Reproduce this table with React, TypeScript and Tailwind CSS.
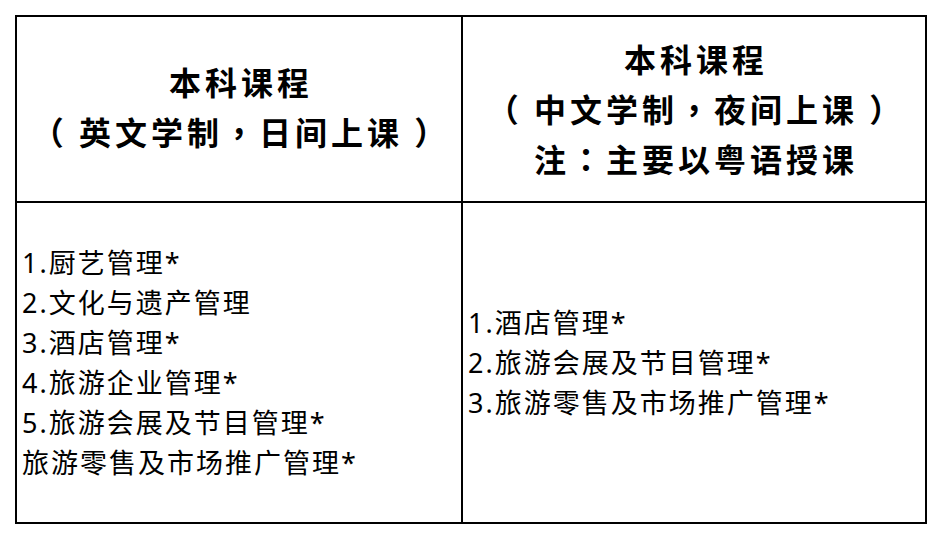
export default function App() {
  const leftItems = ["1.厨艺管理*", "2.文化与遗产管理", "3.酒店管理*", "4.旅游企业管理*", "5.旅游会展及节目管理*", "旅游零售及市场推广管理*"];
  const rightItems = ["1.酒店管理*", "2.旅游会展及节目管理*", "3.旅游零售及市场推广管理*"];

  return (
    <div className="w-[942px] h-[540px] bg-white pt-[15px] pl-[15px]">
      <table className="border-collapse border-2 border-black text-black">
        <tbody>
          <tr className="h-[186px]">
            <td className="w-[446px] border-2 border-black text-center align-middle pb-[7px] font-bold text-[32px] leading-[50px] tracking-[4px] [font-family:'Noto_Sans_CJK_TC',sans-serif]">
              <div className="pl-[4px]">本科课程</div>
              <div className="pl-[4px] whitespace-pre">（ 英文学制，日间上课 ）</div>
            </td>
            <td className="w-[464px] border-2 border-black text-center align-middle pb-[2px] font-bold text-[32px] leading-[50px] tracking-[4px] [font-family:'Noto_Sans_CJK_TC',sans-serif]">
              <div className="pl-[4px]">本科课程</div>
              <div className="pl-[4px] whitespace-pre">（ 中文学制，夜间上课 ）</div>
              <div className="pl-[4px]">注：主要以粤语授课</div>
            </td>
          </tr>
          <tr className="h-[321px]">
            <td className="border-2 border-black align-middle pl-[5px] text-[27px] leading-[40px] tracking-[2px] [font-family:'Noto_Sans','Noto_Sans_CJK_SC',sans-serif]">
              {leftItems.map((t) => (
                <div key={t}>{t}</div>
              ))}
            </td>
            <td className="border-2 border-black align-middle pl-[5px] text-[27px] leading-[40px] tracking-[2px] [font-family:'Noto_Sans','Noto_Sans_CJK_SC',sans-serif]">
              {rightItems.map((t) => (
                <div key={t}>{t}</div>
              ))}
            </td>
          </tr>
        </tbody>
      </table>
    </div>
  );
}
